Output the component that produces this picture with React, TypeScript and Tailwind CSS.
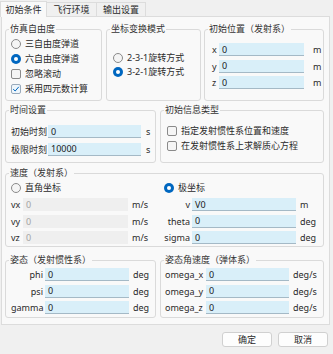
import React from 'react'

const font = { fontFamily: '"Noto Sans", "Noto Sans CJK SC", sans-serif' }

const Radio = ({ checked }: { checked?: boolean }) =>
  checked ? (
    <span className="inline-flex w-[10px] h-[10px] rounded-full bg-[#0067c0] items-center justify-center shrink-0">
      <span className="w-[4px] h-[4px] rounded-full bg-white" />
    </span>
  ) : (
    <span className="inline-block w-[10px] h-[10px] rounded-full border border-[#8a8a8a] bg-[#f5f5f5] shrink-0" />
  )

const Check = ({ checked }: { checked?: boolean }) =>
  checked ? (
    <span className="inline-flex w-[10px] h-[10px] rounded-[2px] border border-[#9ab] bg-[#eef6fc] items-center justify-center shrink-0">
      <svg width="8" height="8" viewBox="0 0 8 8">
        <path d="M1.2 4.2 L3.2 6 L6.8 1.8" fill="none" stroke="#0067c0" strokeWidth="1" />
      </svg>
    </span>
  ) : (
    <span className="inline-block w-[10px] h-[10px] rounded-[2px] border border-[#8a8a8a] bg-[#f5f5f5] shrink-0" />
  )

const Input = ({ value, w, disabled }: { value: string; w: string; disabled?: boolean }) => (
  <div
    className={`${w} h-[13px] flex items-center pl-[3px] leading-none ${
      disabled ? 'bg-[#efefef] text-[#a3a3a3]' : 'bg-[#d9eff9] border-b border-[#a4b9c6] text-[#1a1a1a]'
    }`}
  >
    {value}
  </div>
)

const Box = ({ title, className, children }: { title: string; className: string; children: React.ReactNode }) => (
  <fieldset className={`border border-[#dadada] rounded-[3px] ${className}`}>
    <legend className="ml-[3px] px-[1px] leading-[12px] text-[#333]">{title}</legend>
    {children}
  </fieldset>
)

export default function App() {
  return (
    <div style={font} className="w-[333px] h-[354px] bg-[#f0f0f0] text-[9px] text-[#2a2a2a] overflow-hidden">
      {/* tabs */}
      <div className="flex h-[16px] items-end">
        <div className="w-[47px] h-[16px] bg-[#f9f9f9] border border-b-0 border-[#dcdcdc] flex items-center justify-center relative top-[1px] z-10">
          初始条件
        </div>
        <div className="w-[50px] h-[14px] border-r border-t border-[#dcdcdc] flex items-center justify-center">飞行环境</div>
        <div className="w-[49px] h-[14px] border-r border-t border-[#dcdcdc] flex items-center justify-center">输出设置</div>
      </div>

      {/* panel */}
      <div className="ml-[1px] w-[329px] h-[309px] bg-[#f9f9f9] border border-[#dcdcdc] pl-[3px] pt-[6px]">
        {/* row 1 */}
        <div className="flex h-[78px]">
          <Box title="仿真自由度" className="w-[97px] h-[78px]">
            <div className="pt-[1px] pl-[5px] flex flex-col">
              <div className="h-[15px] flex items-center gap-[4px]"><Radio />三自由度弹道</div>
              <div className="h-[15px] flex items-center gap-[4px]"><Radio checked />六自由度弹道</div>
              <div className="h-[15px] flex items-center gap-[4px]"><Check />忽略滚动</div>
              <div className="h-[15px] flex items-center gap-[4px]"><Check checked />采用四元数计算</div>
            </div>
          </Box>
          <Box title="坐标变换模式" className="ml-[4px] w-[95px] h-[78px]">
            <div className="pt-[16px] pl-[6px] flex flex-col">
              <div className="h-[14px] flex items-center gap-[4px]"><Radio />2-3-1旋转方式</div>
              <div className="h-[14px] flex items-center gap-[4px]"><Radio checked />3-2-1旋转方式</div>
            </div>
          </Box>
          <Box title="初始位置（发射系）" className="ml-[3px] w-[120px] h-[78px]">
            <div className="pt-[8px] pl-[7px] flex flex-col gap-[3px]">
              {['x', 'y', 'z'].map((k) => (
                <div key={k} className="flex items-center">
                  <span className="w-[7px]">{k}</span>
                  <Input value="0" w="w-[85px]" />
                  <span className="ml-[9px]">m</span>
                </div>
              ))}
            </div>
          </Box>
        </div>

        {/* row 2 */}
        <div className="flex mt-[3px] h-[59px]">
          <Box title="时间设置" className="w-[151px] h-[59px]">
            <div className="pt-[9px] pl-[5px] flex flex-col gap-[4px]">
              <div className="flex items-center">
                <span className="w-[37px]">初始时刻</span>
                <Input value="0" w="w-[93px]" />
                <span className="ml-[5px]">s</span>
              </div>
              <div className="flex items-center">
                <span className="w-[37px]">极限时刻</span>
                <Input value="10000" w="w-[93px]" />
                <span className="ml-[5px]">s</span>
              </div>
            </div>
          </Box>
          <Box title="初始信息类型" className="ml-[4px] w-[164px] h-[59px]">
            <div className="pt-[8px] pl-[6px] flex flex-col gap-[1px]">
              <div className="h-[14px] flex items-center gap-[4px]"><Check />指定发射惯性系位置和速度</div>
              <div className="h-[14px] flex items-center gap-[4px]"><Check />在发射惯性系上求解质心方程</div>
            </div>
          </Box>
        </div>

        {/* row 3 */}
        <Box title="速度（发射系）" className="mt-[4px] w-[319px] h-[80px]">
          <div className="flex pt-[2px]">
            <div className="w-[154px] pl-[5px] flex flex-col gap-[3px]">
              <div className="h-[14px] flex items-center gap-[4px]"><Radio />直角坐标</div>
              {['vx', 'vy', 'vz'].map((k) => (
                <div key={k} className="flex items-center">
                  <span className="w-[12px]">{k}</span>
                  <Input value="0" w="w-[105px]" disabled />
                  <span className="ml-[4px]">m/s</span>
                </div>
              ))}
            </div>
            <div className="pl-[4px] flex flex-col gap-[3px]">
              <div className="h-[14px] flex items-center gap-[4px]"><Radio checked />极坐标</div>
              {[
                ['v', 'V0', 'm'],
                ['theta', '0', 'deg'],
                ['sigma', '0', 'deg'],
              ].map(([k, v, u]) => (
                <div key={k} className="flex items-center">
                  <span className="w-[28px] text-right pr-[2px]">{k}</span>
                  <Input value={v} w="w-[104px]" />
                  <span className="ml-[4px]">{u}</span>
                </div>
              ))}
            </div>
          </div>
        </Box>

        {/* row 4 */}
        <div className="flex mt-[7px] h-[64px]">
          <Box title="姿态（发射惯性系）" className="w-[151px] h-[64px]">
            <div className="pt-[2px] pl-[5px] flex flex-col gap-[3px]">
              {['phi', 'psi', 'gamma'].map((k) => (
                <div key={k} className="flex items-center">
                  <span className="w-[34px] text-right pr-[2px]">{k}</span>
                  <Input value="0" w="w-[84px]" />
                  <span className="ml-[4px]">deg</span>
                </div>
              ))}
            </div>
          </Box>
          <Box title="姿态角速度（弹体系）" className="ml-[4px] w-[164px] h-[64px]">
            <div className="pt-[2px] pl-[4px] flex flex-col gap-[3px]">
              {['omega_x', 'omega_y', 'omega_z'].map((k) => (
                <div key={k} className="flex items-center">
                  <span className="w-[41px]">{k}</span>
                  <Input value="0" w="w-[83px]" />
                  <span className="ml-[4px]">deg/s</span>
                </div>
              ))}
            </div>
          </Box>
        </div>
      </div>

      {/* buttons */}
      <div className="flex justify-end gap-[6px] pr-[5px] mt-[7px]">
        <button className="w-[50px] h-[15px] bg-[#fdfdfd] border border-[#d0d0d0] rounded-[3px] text-[9px] leading-none">确定</button>
        <button className="w-[50px] h-[15px] bg-[#fdfdfd] border border-[#d0d0d0] rounded-[3px] text-[9px] leading-none">取消</button>
      </div>
    </div>
  )
}
